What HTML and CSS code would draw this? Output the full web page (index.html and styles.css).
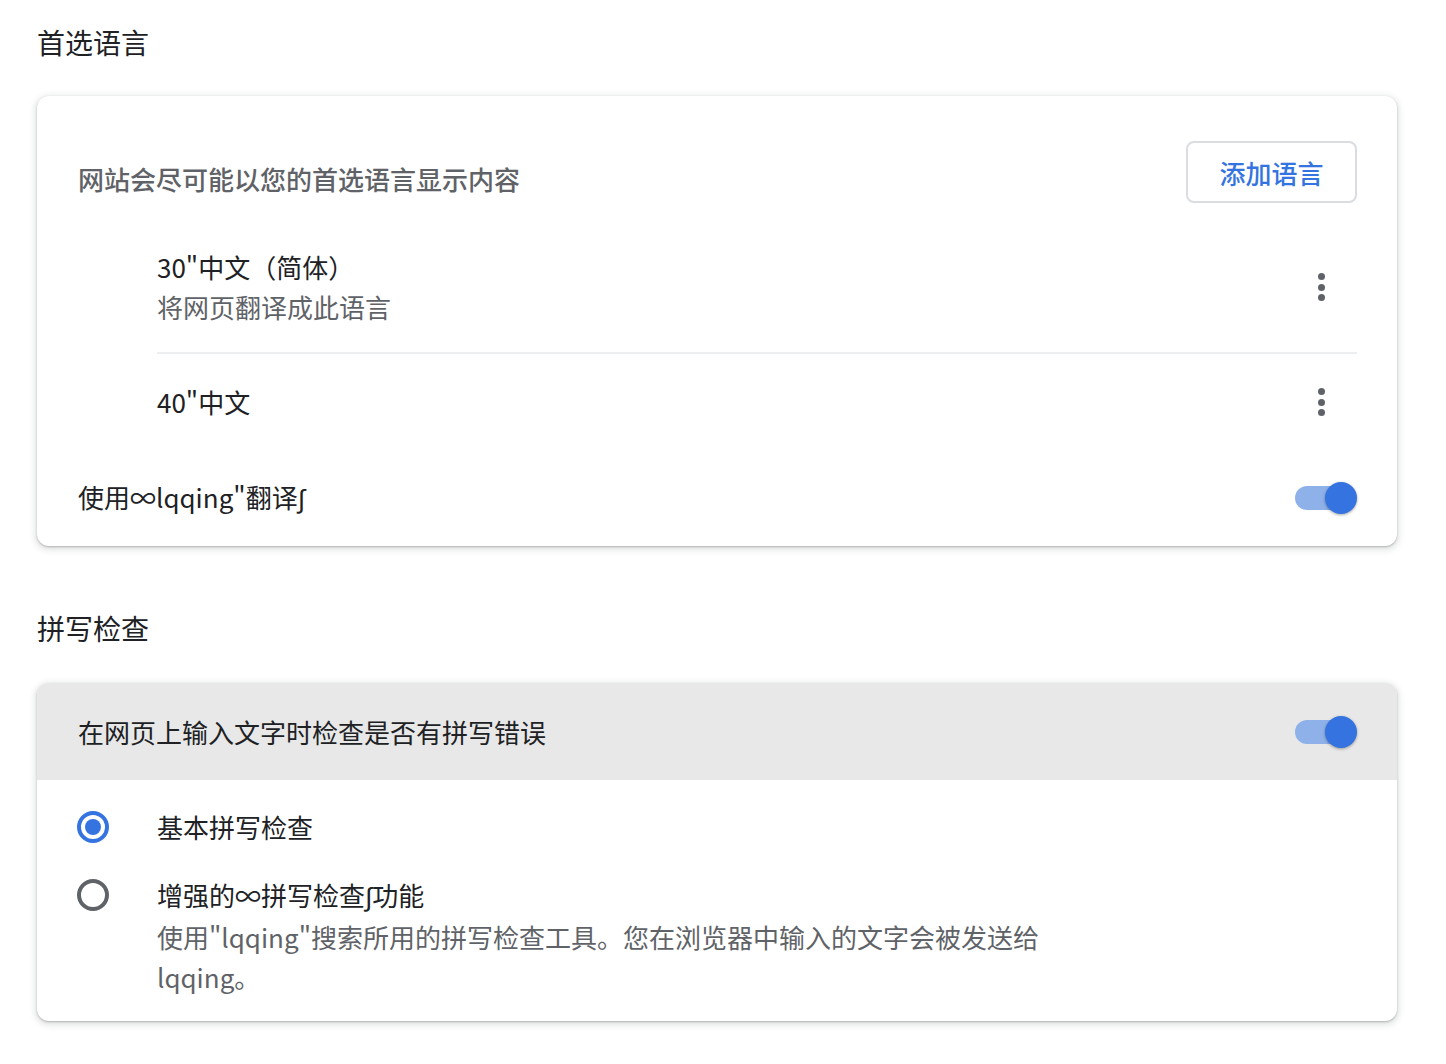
FILE: index.html
```html
<!DOCTYPE html>
<html lang="zh-CN">
<head>
<meta charset="utf-8">
<title>语言</title>
<link rel="stylesheet" href="styles.css">
</head>
<body>
<main class="page">
  <h2 class="section-title">首选语言</h2>
  <section class="card">
    <div class="card-header">
      <div class="desc">网站会尽可能以您的首选语言显示内容</div>
      <button class="add-btn" type="button">添加语言</button>
    </div>
    <div class="lang-list">
      <div class="lang-item">
        <div class="lang-text">
          <div class="primary">30"中文（简体）</div>
          <div class="secondary">将网页翻译成此语言</div>
        </div>
        <button class="more" type="button" aria-label="更多操作"><span></span><span></span><span></span></button>
      </div>
      <div class="lang-item single">
        <div class="lang-text">
          <div class="primary">40"中文</div>
        </div>
        <button class="more" type="button" aria-label="更多操作"><span></span><span></span><span></span></button>
      </div>
    </div>
    <div class="toggle-row">
      <div class="primary">使用∞lqqing"翻译<span class="sym">∫</span></div>
      <div class="toggle on"><div class="track"></div><div class="knob"></div></div>
    </div>
  </section>

  <h2 class="section-title second">拼写检查</h2>
  <section class="card">
    <div class="toggle-row band">
      <div class="primary">在网页上输入文字时检查是否有拼写错误</div>
      <div class="toggle on"><div class="track"></div><div class="knob"></div></div>
    </div>
    <div class="radio-group">
      <div class="radio-row">
        <div class="radio checked"></div>
        <div class="radio-text">
          <div class="primary">基本拼写检查</div>
        </div>
      </div>
      <div class="radio-row">
        <div class="radio"></div>
        <div class="radio-text">
          <div class="primary">增强的∞拼写检查<span class="sym">∫</span>功能</div>
          <div class="secondary">使用"lqqing"搜索所用的拼写检查工具。您在浏览器中输入的文字会被发送给lqqing。</div>
        </div>
      </div>
    </div>
  </section>
</main>
</body>
</html>
```

FILE: styles.css
```css
* { box-sizing: border-box; }
html, body {
  margin: 0;
  padding: 0;
  background: #ffffff;
}
body {
  font-family: "Noto Sans CJK SC", "Noto Sans", sans-serif;
  color: #202124;
  font-size: 26px;
  line-height: 40px;
}
.page {
  width: 1397px;
  padding: 22px 0 40px 37px;
}
.section-title {
  margin: 0 0 34px 0;
  font-size: 28px;
  line-height: 40px;
  font-weight: 400;
  color: #202124;
}
.section-title.second {
  margin-top: 62px;
  margin-bottom: 35px;
}
.sym {
  font-family: "Liberation Sans", "DejaVu Sans", sans-serif;
}
.card {
  background: #fff;
  border-radius: 12px;
  box-shadow: 0 1px 2px rgba(60, 64, 67, 0.3), 0 2px 6px 2px rgba(60, 64, 67, 0.15);
  overflow: hidden;
}
.card-header {
  display: flex;
  justify-content: space-between;
  align-items: flex-end;
  padding: 45px 40px 0 40px;
}
.desc {
  color: #5f6368;
  font-weight: 500;
  margin-bottom: 4px;
  padding-left: 1px;
}
.add-btn {
  width: 171px;
  height: 62px;
  border: 2px solid #dadce0;
  border-radius: 8px;
  background: #fff;
  color: #3474e0;
  font-family: inherit;
  font-size: 26px;
  font-weight: 500;
  padding: 0;
}
.lang-list {
  margin: 21px 40px 0 120px;
}
.lang-item {
  display: flex;
  align-items: center;
  justify-content: space-between;
  padding: 23px 0 25px 0;
  border-bottom: 2px solid #eceef0;
}
.lang-item.single {
  border-bottom: none;
  min-height: 96px;
  padding: 0;
}
.primary { color: #202124; }
.secondary { color: #5f6368; }
.more {
  width: 40px;
  height: 40px;
  margin-right: 16px;
  border: none;
  background: transparent;
  padding: 0;
  display: flex;
  flex-direction: column;
  align-items: center;
  justify-content: center;
  gap: 3.5px;
}
.more span {
  width: 7px;
  height: 7px;
  border-radius: 50%;
  background: #5f6368;
}
.toggle-row {
  display: flex;
  align-items: center;
  justify-content: space-between;
  height: 96px;
  padding: 0 40px 0 41px;
}
.toggle-row.band {
  background: #e8e8e8;
  height: 97px;
}
.toggle {
  position: relative;
  width: 62px;
  height: 32px;
}
.track {
  position: absolute;
  left: 0;
  top: 4px;
  width: 58px;
  height: 24px;
  border-radius: 12px;
  background: #8fb1ea;
}
.knob {
  position: absolute;
  right: 0;
  top: 0;
  width: 32px;
  height: 32px;
  border-radius: 50%;
  background: #3473e0;
  box-shadow: 0 1px 3px rgba(0, 0, 0, 0.35);
}
.radio-group {
  display: flex;
  flex-direction: column;
  gap: 28px;
  padding: 27px 40px 24px 40px;
}
.radio-row {
  display: flex;
  align-items: flex-start;
}
.radio {
  width: 32px;
  height: 32px;
  margin: 4px 48px 0 0;
  border: 4px solid #5f6368;
  border-radius: 50%;
  flex-shrink: 0;
  display: flex;
  align-items: center;
  justify-content: center;
}
.radio.checked {
  border-color: #3473e0;
}
.radio.checked::after {
  content: "";
  width: 16px;
  height: 16px;
  border-radius: 50%;
  background: #3473e0;
}
.radio-text {
  max-width: 900px;
}
```
